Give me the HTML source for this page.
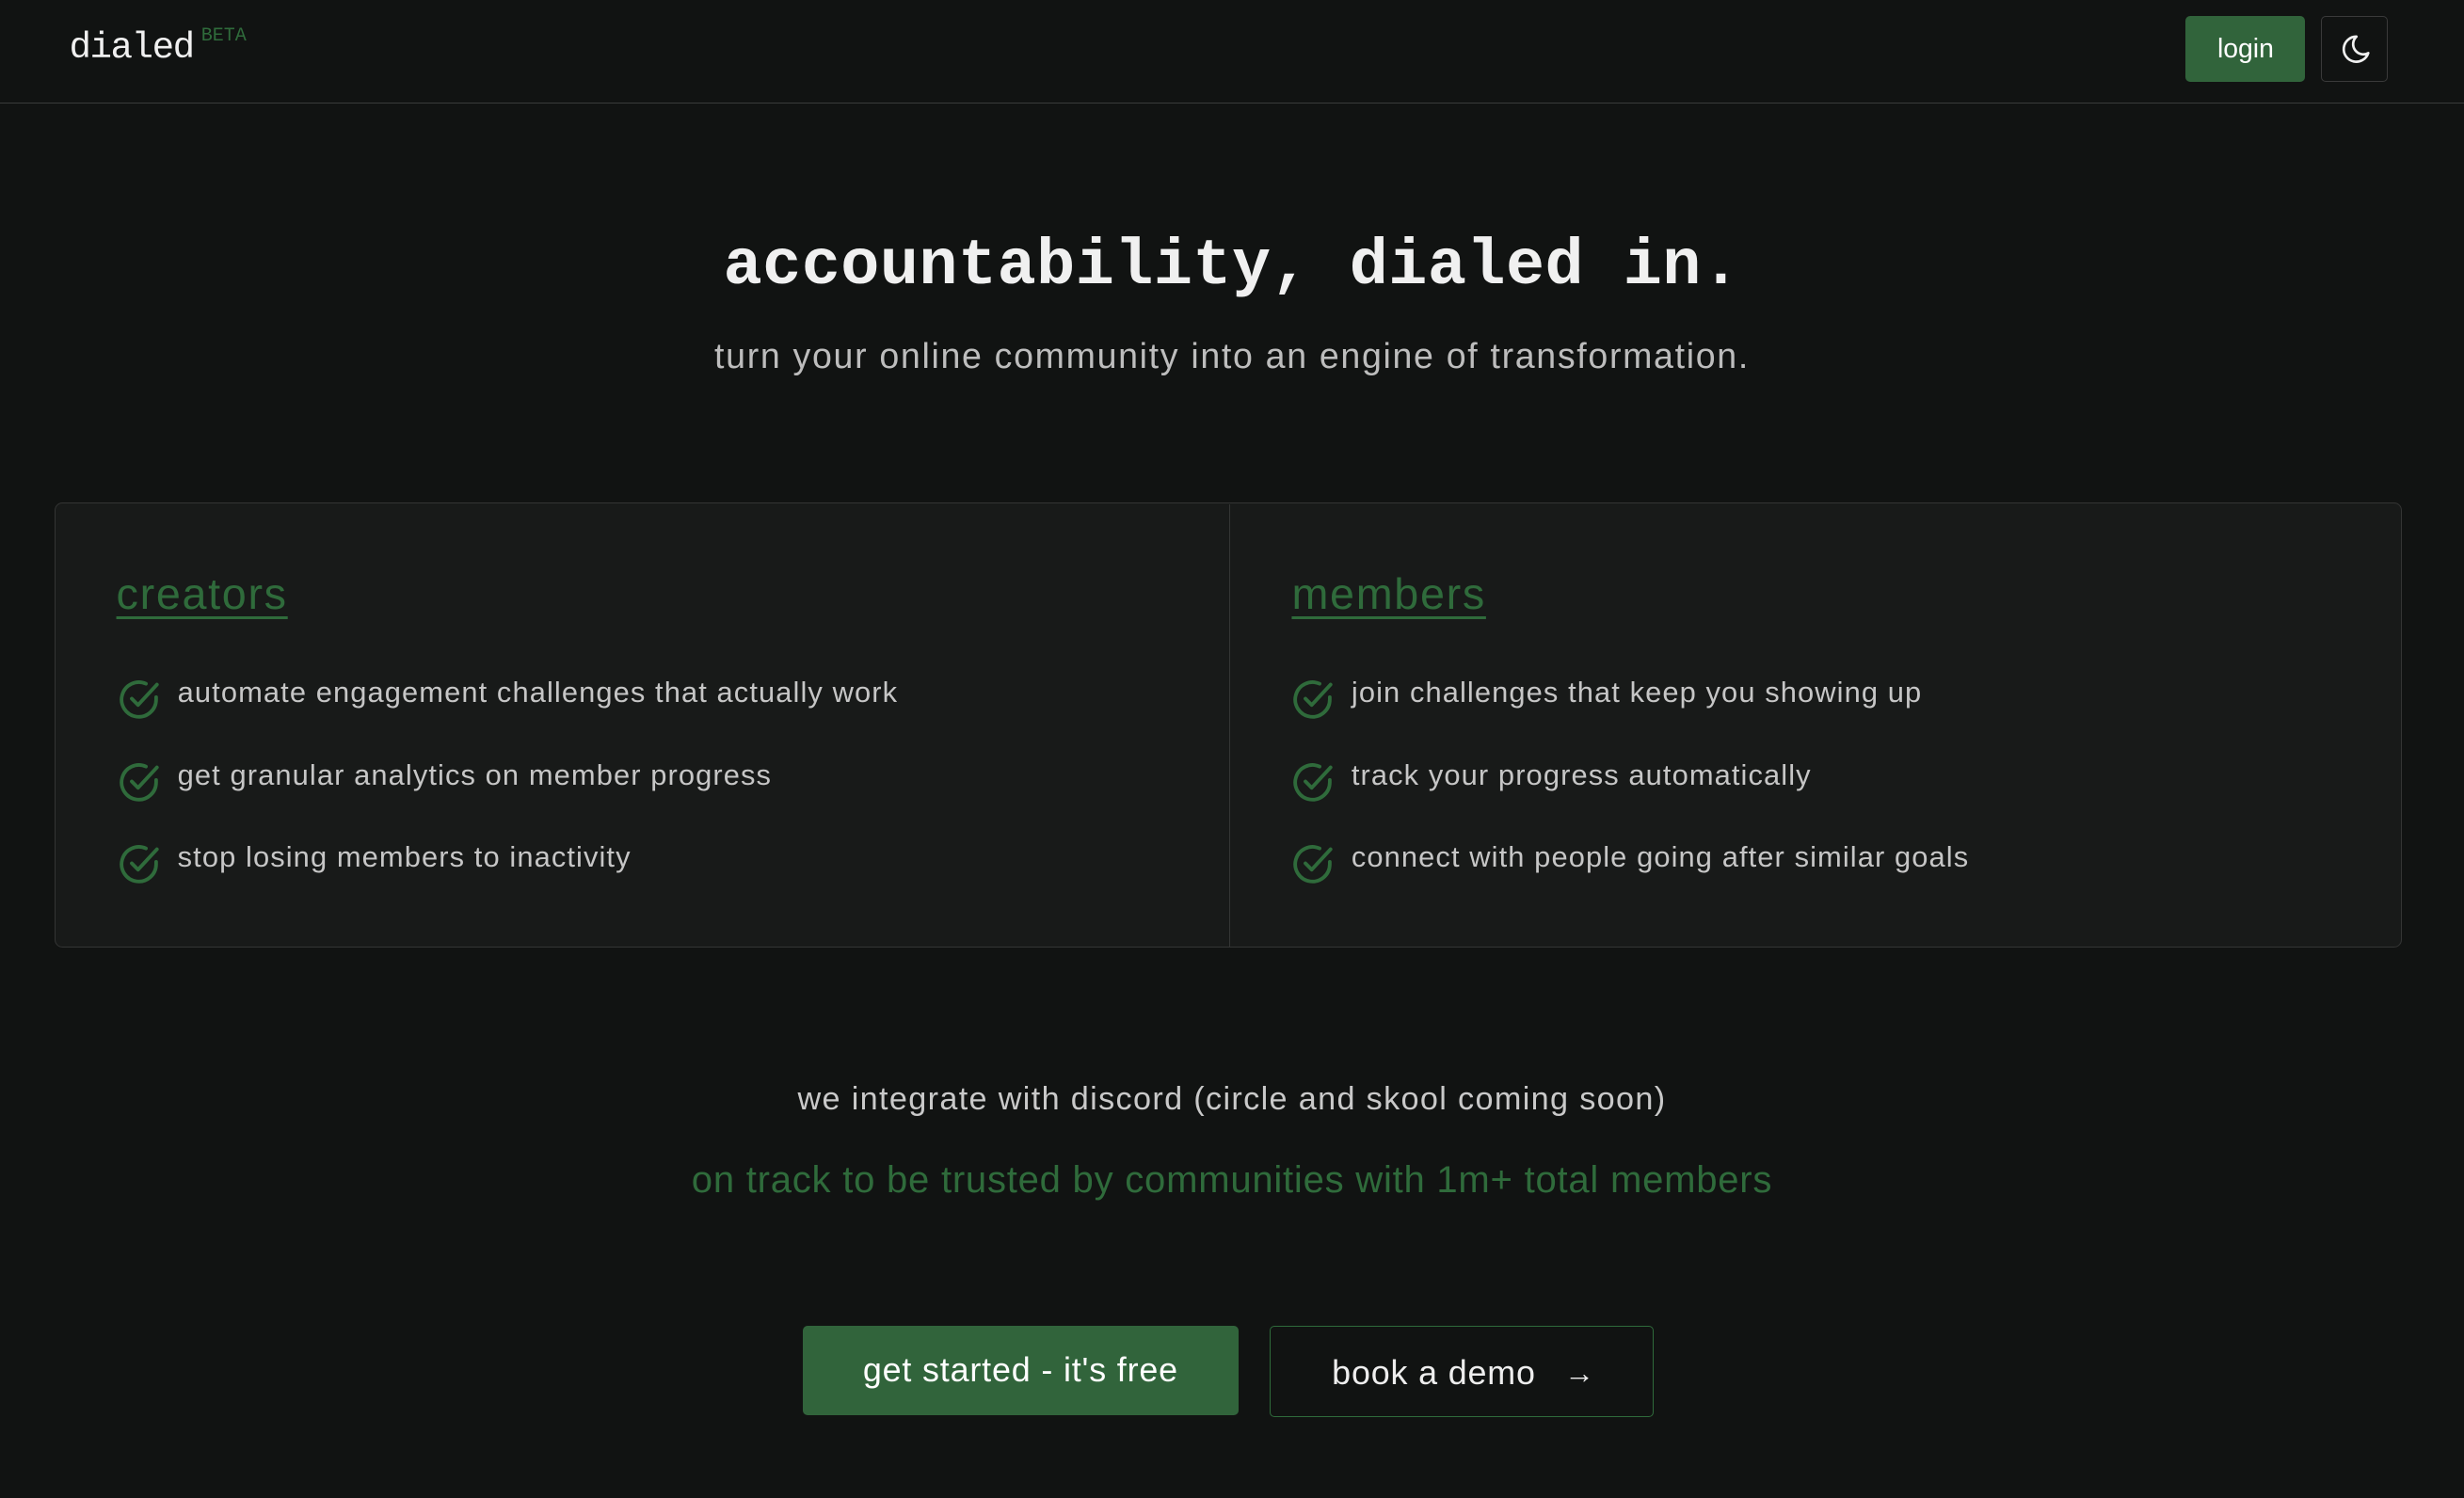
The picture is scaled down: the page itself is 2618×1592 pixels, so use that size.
<!DOCTYPE html>
<html><head><meta charset="utf-8"><style>
html,body{margin:0;padding:0;background:#111312;}
body{width:2618px;height:1592px;overflow:hidden;}
#w{zoom:1.66964;width:1568px;height:953px;position:relative;font-family:"Liberation Sans",sans-serif;color:#ddd;}
.a{position:absolute;}
.hdr{left:0;top:0;width:1568px;height:65px;border-bottom:1px solid #3a3b3a;}
.logo{left:44px;top:17px;font-family:"Liberation Mono",monospace;font-size:23.5px;color:#f0f0f0;letter-spacing:-0.9px;}
.beta{left:128px;top:16px;font-size:12px;color:#2f6b3b;font-family:"Liberation Mono",monospace;}
.login{left:1391px;top:10px;width:76px;height:42px;background:#31643b;border-radius:3px;color:#fff;font-size:17px;text-align:center;line-height:42px;}
.theme{left:1477px;top:10px;width:41px;height:41px;border:1px solid #3a3a3a;border-radius:3px;}
.h1{left:0;width:1568px;top:146px;text-align:center;font-family:"Liberation Mono",monospace;font-weight:bold;font-size:41px;color:#f0f0f0;letter-spacing:0.3px;}
.sub{left:0;width:1568px;top:214px;text-align:center;font-size:22.5px;color:#bdbdbd;letter-spacing:1px;}
.card{left:35px;top:320px;width:1492px;height:282px;border:1px solid #343534;border-radius:5px;background:#181a19;}
.div{left:782px;top:321px;width:1px;height:282px;background:#343534;}
.ttl{font-size:28px;color:#2f6b3b;text-decoration:underline;text-underline-offset:5px;text-decoration-thickness:1.5px;letter-spacing:1px;}
.it{font-size:18.5px;color:#c6c6c6;letter-spacing:0.65px;}
.ck{width:28px;height:28px;}
.c1{left:0;width:1568px;top:688px;text-align:center;font-size:20.5px;color:#c9c9c9;letter-spacing:0.8px;}
.c2{left:0;width:1568px;top:738px;text-align:center;font-size:24px;color:#2f6b3b;letter-spacing:0.45px;}
.b1{left:511px;top:844px;width:277px;height:57px;background:#31643b;border-radius:3px;color:#fff;font-size:21.5px;text-align:center;line-height:57px;letter-spacing:0.5px;}
.b2{left:808px;top:844px;width:243px;height:57px;border:1px solid #2f6b3b;border-radius:3px;color:#eee;font-size:21.5px;line-height:59px;letter-spacing:0.5px;}
</style></head><body><div id="w">
<div class="a hdr"></div>
<div class="a logo">dialed</div>
<div class="a beta">BETA</div>
<div class="a login">login</div>
<div class="a theme"><svg width="41" height="41" viewBox="0 0 41 41"><path d="M22 12.5a8 8 0 1 0 7.5 10.5a6.5 6.5 0 0 1 -7.5 -10.5z" fill="none" stroke="#f0f0f0" stroke-width="1.6" stroke-linejoin="round"/></svg></div>
<div class="a h1">accountability, dialed in.</div>
<div class="a sub">turn your online community into an engine of transformation.</div>
<div class="a card"></div>
<div class="a div"></div>
<div class="a ttl" style="left:74px;top:362px">creators</div>
<div class="a ttl" style="left:822px;top:362px">members</div>
<svg width="0" height="0" style="position:absolute"><symbol id="ck" viewBox="0 0 28 28"><path d="M24.5 12.5v1.5a11 11 0 1 1 -6.5 -10" fill="none" stroke="#2f6b3b" stroke-width="2.3" stroke-linecap="round"/><path d="M9 13.5l4 4l12-13" fill="none" stroke="#2f6b3b" stroke-width="2.3" stroke-linecap="round" stroke-linejoin="round"/></symbol></svg>
<svg class="a ck" style="left:75px;top:431px"><use href="#ck"/></svg>
<svg class="a ck" style="left:75px;top:484px"><use href="#ck"/></svg>
<svg class="a ck" style="left:75px;top:536px"><use href="#ck"/></svg>
<svg class="a ck" style="left:822px;top:431px"><use href="#ck"/></svg>
<svg class="a ck" style="left:822px;top:484px"><use href="#ck"/></svg>
<svg class="a ck" style="left:822px;top:536px"><use href="#ck"/></svg>
<div class="a it" style="left:113px;top:430px">automate engagement challenges that actually work</div>
<div class="a it" style="left:113px;top:483px">get granular analytics on member progress</div>
<div class="a it" style="left:113px;top:535px">stop losing members to inactivity</div>
<div class="a it" style="left:860px;top:430px">join challenges that keep you showing up</div>
<div class="a it" style="left:860px;top:483px">track your progress automatically</div>
<div class="a it" style="left:860px;top:535px">connect with people going after similar goals</div>
<div class="a c1">we integrate with discord (circle and skool coming soon)</div>
<div class="a c2">on track to be trusted by communities with 1m+ total members</div>
<div class="a b1">get started - it's free</div>
<div class="a b2"><span style="position:absolute;left:39px">book a demo</span><span style="position:absolute;left:187px;font-size:19px">→</span></div>
</div></body></html>
